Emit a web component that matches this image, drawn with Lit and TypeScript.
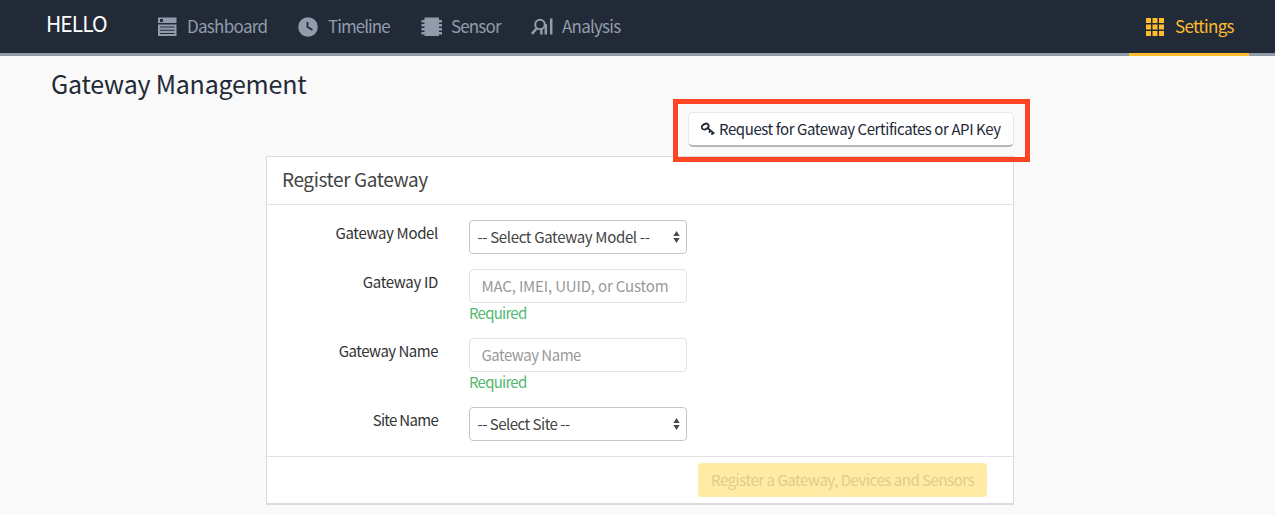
import { LitElement, html, css, svg } from "lit";
import { customElement } from "lit/decorators.js";

const icons = {
  dashboard: svg`<svg width="20" height="20" viewBox="0 0 20 20" fill="currentColor"><path fill-rule="evenodd" d="M1 .5h18.500v5.500H1zM3 2v3h3V2zM1 7.500h18.500v11.500H1zM3 9.500v1h14.500v-1zM3 12.700v1h14.500v-1zM3 16v1h14.500v-1z"/></svg>`,
  timeline: svg`<svg width="20" height="20" viewBox="0 0 20 20"><circle cx="10" cy="10" r="9.800" fill="currentColor"/><path d="M9.500 5v5l5 3" fill="none" stroke="#232a37" stroke-width="1.800"/></svg>`,
  sensor: svg`<svg width="22" height="20" viewBox="0 0 22 20" fill="currentColor"><path d="M3.500 .5h14.500v18.500H3.500zM.5 3h3v2.400h-3zM.5 7h3v2.400h-3zM.5 11h3v2.400h-3zM.5 15h3v2.400h-3zM18 3h3v2.400h-3zM18 7h3v2.400h-3zM18 11h3v2.400h-3zM18 15h3v2.400h-3z"/></svg>`,
  analysis: svg`<svg width="22" height="20" viewBox="0 0 22 20" fill="none" stroke="currentColor"><circle cx="9" cy="7.500" r="4.800" stroke-width="2"/><path d="M6 11L1 16.800" stroke-width="2.600"/><path d="M10.400 12v5.500M14.800 7v10.500M20.200 1.500v16" stroke-width="2.500"/></svg>`,
  settings: svg`<svg width="18" height="18" viewBox="0 0 18 18" fill="currentColor"><path d="M0 0h5v5H0zM6.500 0h5v5h-5zM13 0h5v5h-5zM0 6.500h5v5H0zM6.500 6.500h5v5h-5zM13 6.500h5v5h-5zM0 13h5v5H0zM6.500 13h5v5h-5zM13 13h5v5h-5z"/></svg>`,
  key: svg`<svg width="14" height="14" viewBox="0 0 14 14" fill="none" stroke="currentColor"><ellipse cx="4.200" cy="4.600" rx="3.600" ry="2.600" transform="rotate(-30 4.200 4.600)" stroke-width="1.800"/><path d="M6 5.500l7.300 6.300M9.600 8.600L8 10.600M12 10.500L10.500 12.800" stroke-width="1.800"/></svg>`,
  arrows: svg`<svg width="7" height="12" viewBox="0 0 7 12" fill="#4a4a4a"><path d="M3.500 0L6.700 5H.3zM3.500 12L.3 7h6.400z"/></svg>`,
};

@customElement("app-root")
export class AppRoot extends LitElement {
  static styles = css`
    :host { display: block; box-sizing: border-box; height: 515px; overflow: hidden; background: #f9f9f9; color: #222a38; font: 15px/20px "Noto Sans CJK KR", sans-serif; }
    * { box-sizing: border-box; }
    svg { display: block; flex: none; }
    span, h1, h2 { white-space: nowrap; }
    .nav { height: 56px; background: #232a37; border-bottom: 3px solid #8f9bab; display: flex; color: #909cac; font-size: 17px; padding-right: 26px; }
    .brand { width: 157px; padding: 11px 0 0 46px; color: #fff; font-size: 21px; line-height: 24px; letter-spacing: -.95px; }
    .item { display: flex; height: 53px; align-items: center; letter-spacing: -.7px; }
    .item span { padding-bottom: 2px; }
    .item svg { margin-right: 10px; }
    .dash { width: 141px; } .time { width: 123px; letter-spacing: -.95px; } .sens { width: 110px; letter-spacing: -.85px; }
    .sens svg { margin-right: 8px; }
    .anal svg { margin-right: 9px; }
    .anal { letter-spacing: -.78px; }
    .active { margin-left: auto; width: 120px; height: 56px; border-bottom: 3px solid #fdbb2d; color: #fdbb2d; padding-left: 17px; }
    .active svg { margin-right: 11px; }
    h1 { margin: 0; padding: 12px 0 0 51px; font-size: 25px; font-weight: 400; line-height: 30px; height: 43px; letter-spacing: -.22px; }
    .content { width: 748px; margin-left: 266px; }
    .mark { width: 357px; height: 63px; border: 5px solid #fd4526; margin: 0 0 -6px 407px; padding: 8px 11px 0 10px; position: relative; }
    .request { height: 35px; display: flex; align-items: center; gap: 4px; padding-left: 12px; border: 1px solid #e7e7e7; border-bottom: 2px solid #b7b7b7; border-radius: 5px; background: #fff; letter-spacing: -.42px; }
    .panel { height: 349px; background: #fff; border: 1px solid #dcdcdc; border-bottom-width: 2px; }
    h2 { margin: 0; height: 48px; border-bottom: 1px solid #e3e3e3; font-size: 19px; font-weight: 400; line-height: 43px; padding-left: 15px; color: #444; letter-spacing: -.4px; }
    .form { height: 251px; padding-top: 15px; }
    .row { display: flex; height: 49px; } .row.tall { height: 69px; }
    .label { width: 172px; margin-right: 30px; text-align: right; padding: 3px 1px 0 0; color: #333; }
    .control { width: 218px; height: 34px; border: 1px solid #e2e2e2; border-radius: 4px; padding: 0 6px 0 11.5px; display: flex; align-items: center; justify-content: space-between; color: #999; }
    .select { border-color: #c4c4c4; padding-left: 7.5px; color: #444; }
    .help { color: #53b970; line-height: 20px; letter-spacing: -.75px; }
    .fit-a { letter-spacing: -.17px; }
    .fit-b { letter-spacing: -.34px; }
    .fit-c { letter-spacing: -.5px; }
    .fit-d { letter-spacing: -.7px; }
    .footer { height: 48px; border-top: 1px solid #e3e3e3; display: flex; justify-content: flex-end; padding: 6px 26px 0 0; }
    .submit { width: 289px; height: 34px; border-radius: 4px; background: #ffeba3; color: #dfcb8d; padding-left: 13px; line-height: 33px; letter-spacing: -.46px; }
  `;
  render() {
    return html`
      <nav class="nav">
        <div class="brand"><span>HELLO</span></div>
        <div class="item dash">${icons.dashboard}<span>Dashboard</span></div>
        <div class="item time">${icons.timeline}<span>Timeline</span></div>
        <div class="item sens">${icons.sensor}<span>Sensor</span></div>
        <div class="item anal">${icons.analysis}<span>Analysis</span></div>
        <div class="item active">${icons.settings}<span>Settings</span></div>
      </nav>
      <h1>Gateway Management</h1>
      <main class="content">
        <div class="mark"><div class="request">${icons.key}<span>Request for Gateway Certificates or API Key</span></div></div>
        <section class="panel">
          <h2>Register Gateway</h2>
          <div class="form">
            <div class="row"><span class="label fit-b">Gateway Model</span><div class="control select"><span class="fit-b">-- Select Gateway Model --</span>${icons.arrows}</div></div>
            <div class="row tall"><span class="label fit-b">Gateway ID</span><div><div class="control"><span class="fit-a">MAC, IMEI, UUID, or Custom</span></div><div class="help">Required</div></div></div>
            <div class="row tall"><span class="label fit-c">Gateway Name</span><div><div class="control"><span class="fit-c">Gateway Name</span></div><div class="help">Required</div></div></div>
            <div class="row"><span class="label fit-d">Site Name</span><div class="control select"><span class="fit-c">-- Select Site --</span>${icons.arrows}</div></div>
          </div>
          <div class="footer"><div class="submit"><span>Register a Gateway, Devices and Sensors</span></div></div>
        </section>
      </main>`;
  }
}
